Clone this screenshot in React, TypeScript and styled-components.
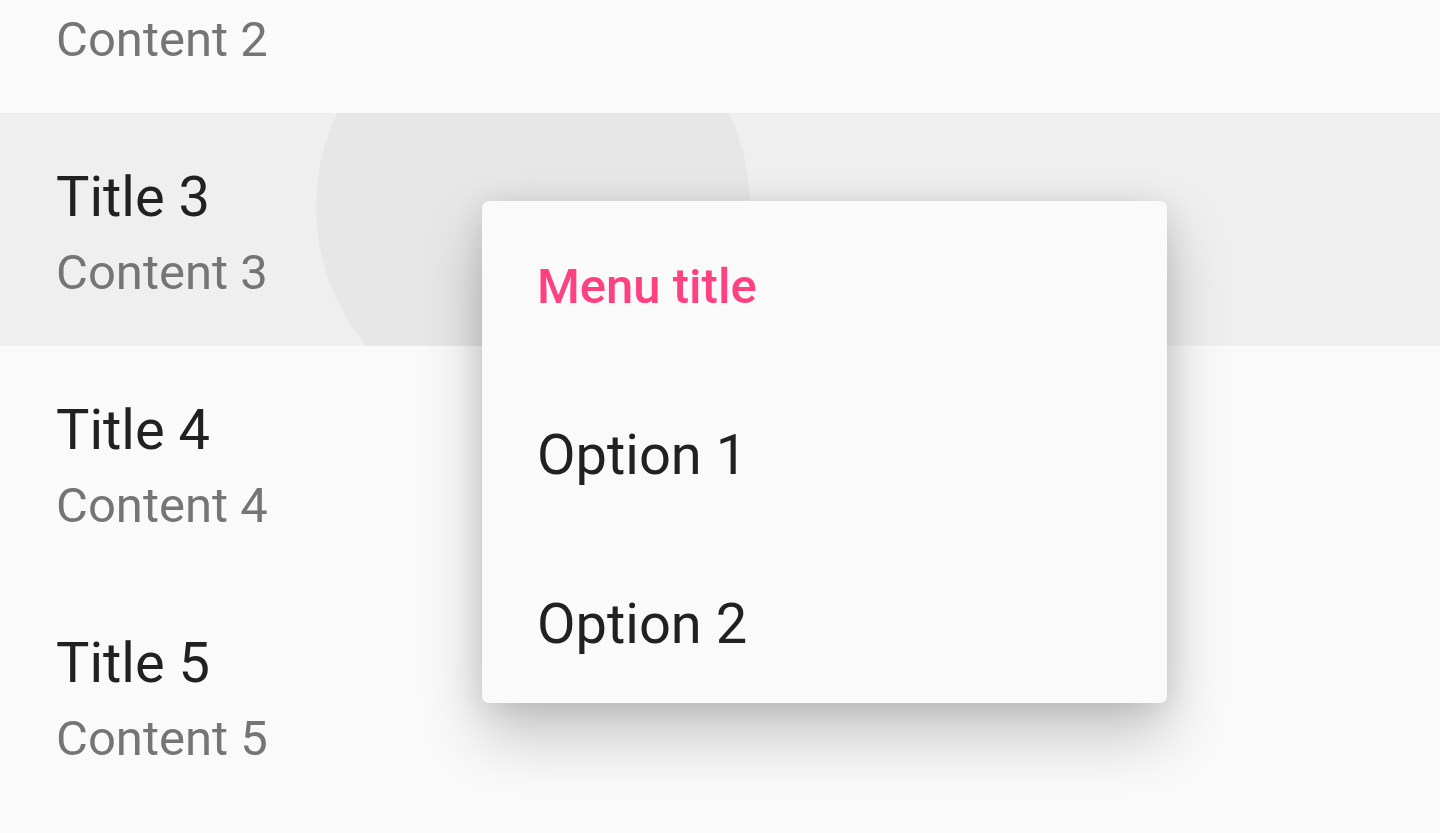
import React from "react";
import styled, { createGlobalStyle } from "styled-components";

type Item = {
  title: string;
  content: string;
  pressed?: boolean;
};

const items: Item[] = [
  { title: "Title 2", content: "Content 2" },
  { title: "Title 3", content: "Content 3", pressed: true },
  { title: "Title 4", content: "Content 4" },
  { title: "Title 5", content: "Content 5" },
];

const options = ["Option 1", "Option 2"];

const GlobalStyle = createGlobalStyle`
  html, body {
    margin: 0;
    padding: 0;
    height: 100%;
    overflow: hidden;
    background: #fafafa;
    font-family: Roboto, "Noto Sans", sans-serif;
  }
`;

function App() {
  return (
    <Screen>
      <GlobalStyle />
      <List>
        {items.map((item) => (
          <Row key={item.title} pressed={item.pressed}>
            {item.pressed && <Ripple />}
            <Title>{item.title}</Title>
            <Content>{item.content}</Content>
          </Row>
        ))}
      </List>
      <Menu>
        <MenuItem>
          <MenuTitle>Menu title</MenuTitle>
        </MenuItem>
        {options.map((opt) => (
          <MenuItem key={opt}>
            <MenuOption>{opt}</MenuOption>
          </MenuItem>
        ))}
      </Menu>
    </Screen>
  );
}

const Screen = styled.div`
  position: relative;
  width: 1440px;
  height: 833px;
  overflow: hidden;
  background: #fafafa;
`;

// list is scrolled: row 2 sits partly above the top edge
const List = styled.div`
  display: flex;
  flex-direction: column;
  margin-top: -120px;
`;

const Row = styled.div<{ pressed?: boolean }>`
  position: relative;
  overflow: hidden;
  box-sizing: border-box;
  height: 233px;
  padding: 51px 56px 0;
  display: flex;
  flex-direction: column;
  background: ${(p) => (p.pressed ? "#efefef" : "#fafafa")};
`;

const Ripple = styled.span`
  position: absolute;
  left: 316px;
  top: -123px;
  width: 434px;
  height: 434px;
  border-radius: 50%;
  background: #e7e7e7;
`;

const Title = styled.div`
  position: relative;
  font-size: 56px;
  line-height: 66px;
  color: #212121;
`;

const Content = styled.div`
  position: relative;
  margin-top: 13px;
  font-size: 49px;
  line-height: 60px;
  color: #757575;
`;

const Menu = styled.div`
  position: absolute;
  left: 482px;
  top: 201px;
  width: 685px;
  height: 502px;
  overflow: hidden;
  border-radius: 7px;
  background: #fafafa;
  display: flex;
  flex-direction: column;
  box-shadow: 0 32px 64px rgba(0, 0, 0, 0.22), 0 4px 30px rgba(0, 0, 0, 0.1);
`;

const MenuItem = styled.div`
  flex: 0 0 169px;
  display: flex;
  align-items: center;
  padding: 0 55px;
`;

const MenuTitle = styled.span`
  font-size: 49px;
  font-weight: 500;
  color: #ff4081;
  transform: translateY(1px);
`;

const MenuOption = styled.span`
  font-size: 56px;
  color: #212121;
`;

export default App;
